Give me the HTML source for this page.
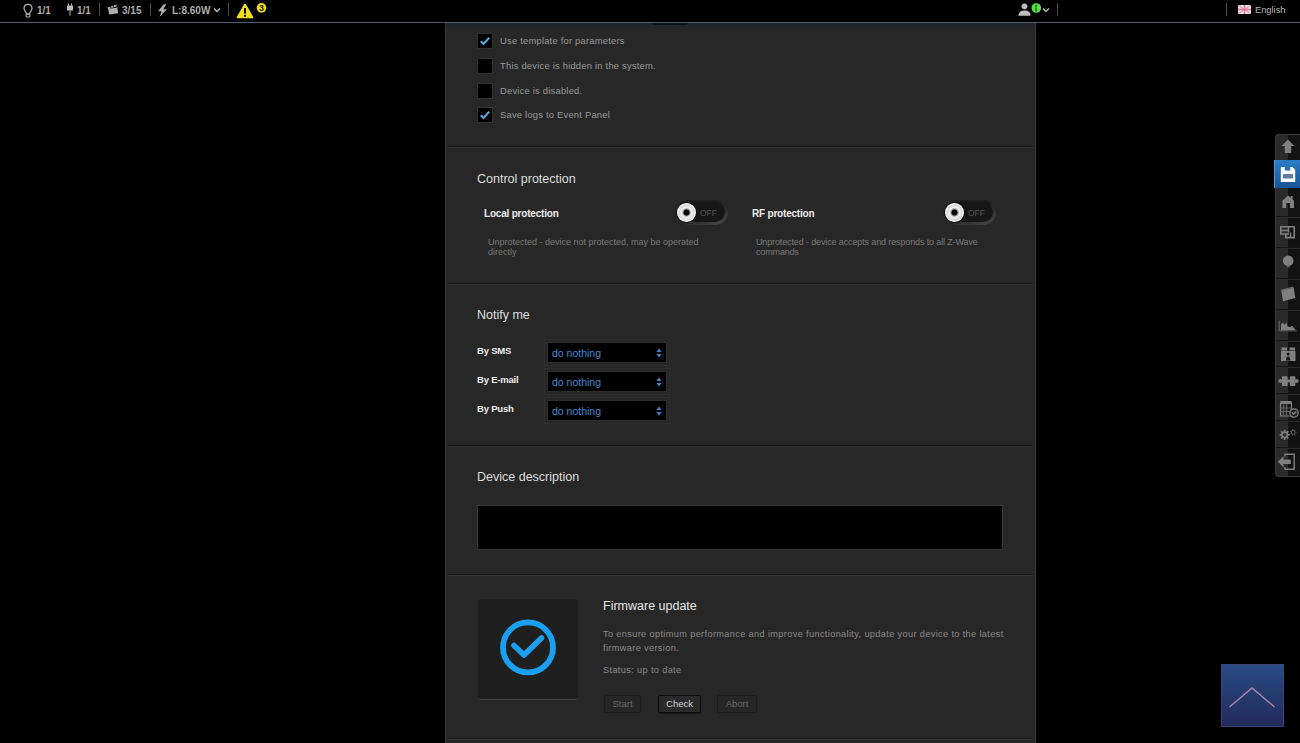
<!DOCTYPE html>
<html><head><meta charset="utf-8">
<style>
*{margin:0;padding:0;box-sizing:border-box}
html,body{width:1300px;height:743px;overflow:hidden;background:#000;font-family:"Liberation Sans",sans-serif}
.a{position:absolute}
.t{position:absolute;white-space:nowrap;line-height:1}
#top{left:0;top:0;width:1300px;height:22px;background:#000}
#topline{left:0;top:22px;width:1300px;height:1px;background:#505c67}
.tb{color:#acacac;font-size:10px;font-weight:700;letter-spacing:0}
.sep{width:1px;height:13px;background:#4e4e4e;top:3px}
#panel{left:445px;top:23px;width:591px;height:720px;background:#272727;border-left:1px solid #3b3b3b;border-right:1px solid #3b3b3b}
.hs{left:448px;width:585px;height:2px;border-top:1px solid #151515;border-bottom:1px solid #353535}
.cb{width:14px;height:14px;background:#000;left:478px;box-shadow:0 0 0 1px #2f2f2f}
.cbt{color:#9a9a9a;font-size:9.4px;letter-spacing:0.22px;left:500px}
.h2{color:#dedede;font-size:12.5px;left:477px}
.lb{color:#ececec;font-size:10px;font-weight:700;letter-spacing:-0.2px}
.desc{color:#7a7a7a;font-size:9px;line-height:10px;white-space:normal}
.sel{left:548px;width:118px;height:19px;background:#000;box-shadow:0 0 0 1px #2c2c2c,0 0 0 3px #272727,0 0 0 4px #2e2e2e}
.selt{color:#4589cf;font-size:10.5px;left:552px}
.btn{height:18px;top:695px;border:1px solid #1d1d1d;border-radius:2px;background:#262626;font-size:9.5px;color:#666;text-align:center;line-height:16px}
.sb{left:1276px;width:24px;height:2px;border-top:1px solid #141414;border-bottom:1px solid #2a2a2a}
.ico{fill:#8a8a8a}
</style></head>
<body>
<div id="top" class="a"></div>
<div id="topline" class="a"></div>

<!-- top left stats -->
<svg class="a" style="left:22px;top:3px" width="12" height="15" viewBox="0 0 12 15">
 <path d="M6 1.3C3.5 1.3 2 3.1 2 5.3c0 1.9 1.3 3.1 2.1 4.3.3.5.4.9.4 1.4h3c0-.5.1-.9.4-1.4.8-1.2 2.1-2.4 2.1-4.3 0-2.2-1.5-4-4-4z" fill="none" stroke="#b5b5b5" stroke-width="1.2"/>
 <rect x="3.9" y="11.1" width="4.2" height="2.9" rx="1.4" fill="none" stroke="#b5b5b5" stroke-width="1.1"/>
</svg>
<div class="t tb" style="left:37px;top:6px">1/1</div>
<svg class="a" style="left:66px;top:3px" width="8" height="13" viewBox="0 0 8 13">
 <rect x="1" y="2.5" width="6" height="5" fill="#bdbdbd"/><rect x="2" y="0.5" width="1" height="2" fill="#bdbdbd"/><rect x="5" y="0.5" width="1" height="2" fill="#bdbdbd"/><rect x="3.5" y="7.5" width="1" height="5" fill="#bdbdbd"/>
</svg>
<div class="t tb" style="left:77px;top:6px">1/1</div>
<div class="a sep" style="left:99px"></div>
<svg class="a" style="left:107px;top:4px" width="12" height="11" viewBox="0 0 12 11">
 <path d="M1.2 5 10.3 3.6 11.2 9.2 2.1 10.6z" fill="#b0b0b0"/><path d="M0.5 3.6 9.3 0.6 9.9 2.3 1.1 5.3z" fill="#b0b0b0"/>
 <path d="M3 1 4 4M5.8 0.2 6.8 3.2" stroke="#000" stroke-width="0.9"/>
</svg>
<div class="t tb" style="left:122px;top:6px">3/15</div>
<div class="a sep" style="left:150px"></div>
<svg class="a" style="left:157px;top:4px" width="11" height="13" viewBox="0 0 11 13">
 <path d="M6.8 0.3 1 7.2h3.6L2.6 12.8 10 5.3H6.4l2.8-5z" fill="#b0b0b0"/>
</svg>
<div class="t tb" style="left:172px;top:6px">L:8.60W</div>
<svg class="a" style="left:213px;top:7px" width="8" height="6" viewBox="0 0 8 6"><path d="M1 1.5 4 4.5 7 1.5" fill="none" stroke="#bdbdbd" stroke-width="1.3"/></svg>
<div class="a sep" style="left:228px"></div>
<svg class="a" style="left:236px;top:3px" width="18" height="16" viewBox="0 0 18 16">
 <path d="M9 1.8 16.2 14.2H1.8z" fill="#f3df1a" stroke="#f3df1a" stroke-width="2.2" stroke-linejoin="round"/>
 <rect x="8" y="5" width="2" height="5.5" fill="#000"/><rect x="8" y="11.8" width="2" height="2" fill="#000"/>
</svg>
<svg class="a" style="left:256px;top:3px" width="11" height="11" viewBox="0 0 11 11">
 <circle cx="5.5" cy="4.9" r="4.8" fill="#f1e01a"/>
 <text x="5.5" y="8.1" font-size="8.8" font-family="Liberation Sans" font-weight="700" text-anchor="middle" fill="#1a1800">3</text>
</svg>

<!-- top right -->
<svg class="a" style="left:1018px;top:3px" width="14" height="13" viewBox="0 0 14 13">
 <circle cx="6.5" cy="3.3" r="2.9" fill="#bdbdbd"/><path d="M0.5 12.8c0-3.5 2.2-5.2 6-5.2s6 1.7 6 5.2z" fill="#bdbdbd"/>
</svg>
<svg class="a" style="left:1031px;top:3px" width="11" height="11" viewBox="0 0 11 11">
 <circle cx="5.3" cy="5" r="4.8" fill="#5fe04a"/><circle cx="5" cy="3" r="1.2" fill="#0d7a12"/><rect x="4.2" y="4.6" width="1.6" height="4" fill="#0d7a12"/>
</svg>
<svg class="a" style="left:1042px;top:7px" width="8" height="6" viewBox="0 0 8 6"><path d="M1 1.5 4 4.5 7 1.5" fill="none" stroke="#bdbdbd" stroke-width="1.3"/></svg>
<div class="a sep" style="left:1057px"></div>
<div class="a sep" style="left:1226px"></div>
<svg class="a" style="left:1238px;top:5px" width="13" height="9" viewBox="0 0 13 9">
 <rect width="13" height="9" fill="#efe6ee"/><path d="M0 0 13 9M13 0 0 9" stroke="#e29ab2" stroke-width="1.2"/><rect x="5.7" y="0" width="1.6" height="9" fill="#e77d9a"/><rect x="0" y="3.7" width="13" height="1.6" fill="#e77d9a"/>
</svg>
<div class="t" style="left:1255px;top:6px;color:#b5b5b5;font-size:9.3px">English</div>

<!-- panel -->
<div id="panel" class="a"></div>
<div class="a" style="left:446px;top:23px;width:589px;height:7px;background:linear-gradient(#1e242a,rgba(39,39,39,0))"></div>
<div class="a" style="left:652px;top:23px;width:36px;height:2px;background:#0b1016;border-radius:0 0 2px 2px"></div>

<!-- section 1 -->
<div class="a cb" style="top:34px"></div>
<svg class="a" style="left:479px;top:36px" width="12" height="10" viewBox="0 0 12 10"><path d="M1.8 5.2 4.5 8 10.2 1.8" fill="none" stroke="#58a3de" stroke-width="2.1"/></svg>
<div class="t cbt" style="top:36px">Use template for parameters</div>
<div class="a cb" style="top:59px"></div>
<div class="t cbt" style="top:61px">This device is hidden in the system.</div>
<div class="a cb" style="top:84px"></div>
<div class="t cbt" style="top:86px">Device is disabled.</div>
<div class="a cb" style="top:108px"></div>
<svg class="a" style="left:479px;top:110px" width="12" height="10" viewBox="0 0 12 10"><path d="M1.8 5.2 4.5 8 10.2 1.8" fill="none" stroke="#58a3de" stroke-width="2.1"/></svg>
<div class="t cbt" style="top:110px">Save logs to Event Panel</div>

<div class="a hs" style="top:146px"></div>

<!-- section 2 -->
<div class="t h2" style="top:173px">Control protection</div>
<div class="t lb" style="left:484px;top:209px">Local protection</div>
<div class="a desc" style="left:488px;top:237px;width:230px">Unprotected - device not protected, may be operated directly</div>
<div class="t lb" style="left:752px;top:209px">RF protection</div>
<div class="a desc" style="left:756px;top:237px;width:240px;letter-spacing:-0.13px">Unprotected - device accepts and responds to all Z-Wave commands</div>

<div class="a" style="left:677px;top:200px;width:51px;height:25px;border-radius:12.5px;background:linear-gradient(160deg,#1c1c1c 0,#1c1c1c 40%,#4a4a4a 100%)"></div>
<div class="a" style="left:679px;top:202px;width:46px;height:20px;border-radius:10px;background:#161616"></div>
<div class="t" style="left:700px;top:209px;color:#565656;font-size:8.5px">OFF</div>
<div class="a" style="left:677px;top:203px;width:19px;height:19px;border-radius:50%;background:radial-gradient(circle at 50% 50%,#000 0,#000 2.6px,#9a9a9a 3.4px,#f2f2f2 5px,#d8d8d8 7px,#ffffff 9.5px);box-shadow:0 0 1px 1px #111"></div>
<div class="a" style="left:945px;top:200px;width:51px;height:25px;border-radius:12.5px;background:linear-gradient(160deg,#1c1c1c 0,#1c1c1c 40%,#4a4a4a 100%)"></div>
<div class="a" style="left:947px;top:202px;width:46px;height:20px;border-radius:10px;background:#161616"></div>
<div class="t" style="left:968px;top:209px;color:#565656;font-size:8.5px">OFF</div>
<div class="a" style="left:945px;top:203px;width:19px;height:19px;border-radius:50%;background:radial-gradient(circle at 50% 50%,#000 0,#000 2.6px,#9a9a9a 3.4px,#f2f2f2 5px,#d8d8d8 7px,#ffffff 9.5px);box-shadow:0 0 1px 1px #111"></div>
<div class="a hs" style="top:283px"></div>

<!-- section 3 -->
<div class="t h2" style="top:309px">Notify me</div>
<div class="t lb" style="left:477px;top:346px;font-size:9.5px;letter-spacing:-0.2px">By SMS</div>
<div class="t lb" style="left:477px;top:375px;font-size:9.5px;letter-spacing:-0.2px">By E-mail</div>
<div class="t lb" style="left:477px;top:404px;font-size:9.5px;letter-spacing:-0.2px">By Push</div>
<div class="a sel" style="top:343px"></div>
<div class="a sel" style="top:372px"></div>
<div class="a sel" style="top:401px"></div>
<div class="t selt" style="top:348px">do nothing</div>
<div class="t selt" style="top:377px">do nothing</div>
<div class="t selt" style="top:406px">do nothing</div>

<svg class="a" style="left:656px;top:348px" width="6" height="10" viewBox="0 0 6 10"><path d="M3 0.5 5.5 4H0.5zM3 9.5 0.5 6h5z" fill="#3b87d4"/></svg><svg class="a" style="left:656px;top:377px" width="6" height="10" viewBox="0 0 6 10"><path d="M3 0.5 5.5 4H0.5zM3 9.5 0.5 6h5z" fill="#3b87d4"/></svg><svg class="a" style="left:656px;top:406px" width="6" height="10" viewBox="0 0 6 10"><path d="M3 0.5 5.5 4H0.5zM3 9.5 0.5 6h5z" fill="#3b87d4"/></svg>
<div class="a hs" style="top:445px"></div>

<!-- section 4 -->
<div class="t h2" style="top:471px">Device description</div>
<div class="a" style="left:477px;top:505px;width:526px;height:45px;background:#000;border:1px solid #3a3a3a"></div>

<div class="a hs" style="top:574px"></div>

<!-- section 5 -->
<div class="a" style="left:478px;top:599px;width:100px;height:101px;background:#1f1f1f;border-radius:3px;border-bottom:1px solid #444"></div>
<svg class="a" style="left:498px;top:617px" width="60" height="60" viewBox="0 0 60 60">
 <circle cx="30" cy="30.4" r="25" fill="none" stroke="#1b9ff0" stroke-width="5.8"/>
 <path d="M16 28.5 26 38 43.5 21" fill="none" stroke="#1b9ff0" stroke-width="5.6" stroke-linecap="round" stroke-linejoin="round"/>
</svg>
<div class="t h2" style="left:603px;top:600px;color:#e6e6e6">Firmware update</div>
<div class="a" style="left:603px;top:627px;width:420px;color:#8a8a8a;font-size:9.2px;letter-spacing:0.36px;line-height:14px">To ensure optimum performance and improve functionality, update your device to the latest firmware version.</div>
<div class="t" style="left:603px;top:666px;color:#8a8a8a;font-size:9.2px;letter-spacing:0.36px">Status: up to date</div>
<div class="a btn" style="left:604px;width:37px">Start</div>
<div class="a btn" style="left:658px;width:43px;background:#2a2a2a;border-color:#0d0d0d;color:#d2d2d2;box-shadow:0 1px 1px #151515">Check</div>
<div class="a btn" style="left:717px;width:40px">Abort</div>

<div class="a hs" style="top:738px"></div>

<!-- sidebar -->
<div class="a" style="left:1275px;top:134px;width:25px;height:343px;background:linear-gradient(90deg,#2a2a2a 0,#2a2a2a 12px,#121212 12px);border-left:1px solid #3a3a3a;border-top:1px solid #3a3a3a;border-bottom:1px solid #3a3a3a;border-radius:4px 0 0 4px"></div>
<div class="a" style="left:1274px;top:160px;width:26px;height:28px;background:linear-gradient(#2b7cc6,#1a5595);border-left:1px solid #4d9ae0"></div>


<!-- sidebar separators -->
<div class="a sb" style="top:216px"></div>
<div class="a sb" style="top:247px"></div>
<div class="a sb" style="top:278px"></div>
<div class="a sb" style="top:309px"></div>
<div class="a sb" style="top:340px"></div>
<div class="a sb" style="top:366px"></div>
<div class="a sb" style="top:393px"></div>
<div class="a sb" style="top:420px"></div>
<div class="a sb" style="top:447px"></div>
<svg class="a" style="left:1275px;top:134px" width="25" height="345" viewBox="1275 134 25 345">
 <g fill="#808080">
 <!-- up arrow -->
 <path d="M1288 139.5 1294.3 146H1291.2V153H1284.8V146H1281.7z"/>
 <!-- home -->
 <path d="M1288 195.5 1294 200.8V208H1290V203H1286.1V208H1282.4V200.8z"/><rect x="1290.7" y="196" width="1.9" height="3.8"/>
 <!-- floorplan -->
 <path d="M1280.8 226.8h13.4v10.8h-8.4v-3.6h-5z" fill="none" stroke="#808080" stroke-width="1.6"/>
 <path d="M1281 230.6h7M1288.5 227v5.5M1286 234h3M1290.5 232.5v5" fill="none" stroke="#808080" stroke-width="1.5"/>
 <!-- bulb -->
 <circle cx="1288.2" cy="260.7" r="5.3"/><rect x="1286.6" y="266" width="3.2" height="1.5" fill="#5a5a5a"/>
 <!-- clapboard -->
 <path d="M1281.3 290.8 1293.8 287.6 1295.3 298 1283 301.3z"/><path d="M1281 289.8 1293 286.6 1293.4 288 1281.4 291.2z" fill="#6a6a6a"/>
 <!-- chart -->
 <path d="M1279.3 320.5V330.8H1297" fill="none" stroke="#6a6a6a" stroke-width="1"/>
 <path d="M1281 330V324.5L1283 322.5 1284.5 325 1286.5 322.3 1287.5 326.5 1290 327 1292 325.8 1294.5 328.5 1295.5 330z"/>
 <!-- panels/gift -->
 <path d="M1281 351h14.5v10H1281z"/><rect x="1281.5" y="347.5" width="5.5" height="3" /><rect x="1289.5" y="347.5" width="5.5" height="3"/>
 <circle cx="1288.1" cy="354" r="1.5" fill="#151515"/><path d="M1285.9 360.5c0-2.6 1-3.9 2.2-3.9s2.2 1.3 2.2 3.9z" fill="#151515"/>
 <!-- puzzle -->
 <rect x="1282" y="376.2" width="5.6" height="9.8" rx="0.8"/><rect x="1289.8" y="376.2" width="5.6" height="9.8" rx="0.8"/>
 <rect x="1287" y="379.6" width="3.4" height="2.8"/>
 <circle cx="1280.4" cy="381" r="2"/><circle cx="1296.6" cy="381" r="2"/>
 <!-- calendar -->
 <path d="M1280.5 403h11v13h-11z" fill="none" stroke="#808080" stroke-width="1.2"/>
 <rect x="1280.5" y="401" width="11" height="3"/>
 <path d="M1283.5 405v10M1286.5 405v10M1280.5 408h11M1280.5 411.5h11" stroke="#6a6a6a" stroke-width="0.8" fill="none"/>
 <circle cx="1294" cy="413" r="4.2" fill="#222" stroke="#808080" stroke-width="1.3"/>
 <path d="M1292 412.5 1293.7 414.3 1296.2 411.5" stroke="#808080" stroke-width="1.3" fill="none"/>
 <!-- gears -->
 <path d="M1288.22 434.03 1289.84 434.02 1289.84 435.58 1288.22 435.57 1287.73 436.74 1288.89 437.88 1287.78 438.99 1286.64 437.83 1285.47 438.32 1285.48 439.94 1283.92 439.94 1283.93 438.32 1282.76 437.83 1281.62 438.99 1280.51 437.88 1281.67 436.74 1281.18 435.57 1279.56 435.58 1279.56 434.02 1281.18 434.03 1281.67 432.86 1280.51 431.72 1281.62 430.61 1282.76 431.77 1283.93 431.28 1283.92 429.66 1285.48 429.66 1285.47 431.28 1286.64 431.77 1287.78 430.61 1288.89 431.72 1287.73 432.86z" fill="#808080"/><circle cx="1284.7" cy="434.8" r="1.9" fill="#2a2a2a"/>
 <path d="M1295.53 431.81 1296.55 431.82 1296.55 432.98 1295.53 432.99 1295.11 433.85 1295.75 434.65 1294.83 435.38 1294.19 434.59 1293.25 434.80 1293.02 435.80 1291.88 435.54 1292.11 434.54 1291.36 433.94 1290.44 434.38 1289.93 433.33 1290.85 432.88 1290.85 431.92 1289.93 431.47 1290.44 430.42 1291.36 430.86 1292.11 430.26 1291.88 429.26 1293.02 429.00 1293.25 430.00 1294.19 430.21 1294.83 429.42 1295.75 430.15 1295.11 430.95z" fill="#505050"/><circle cx="1293.2" cy="432.4" r="1.3" fill="#121212"/>
 <!-- logout -->
 <path d="M1285 456.5V454.3h9.2v15h-9.2V467" fill="none" stroke="#808080" stroke-width="1.4"/>
 <path d="M1277.8 461.8 1283.5 456.3V459.6H1290.8V464H1283.5V467.3z"/>
 </g>
</svg>
<!-- save icon (active) -->
<svg class="a" style="left:1280px;top:166px" width="16" height="17" viewBox="0 0 16 17">
 <path d="M0.8 1h4v3.5h5.5V1h2.2l2.7 2.7V16H0.8z" fill="#fff"/>
 <rect x="3" y="8" width="10" height="4.5" fill="#5d7ea2"/>
</svg>

<!-- scroll-up -->
<div class="a" style="left:1221px;top:664px;width:63px;height:63px;background:linear-gradient(#2b4c86 0,#263f74 35%,#232a5c 100%);border:1px solid #3a4676"></div>
<svg class="a" style="left:1221px;top:664px" width="63" height="63" viewBox="0 0 63 63"><path d="M8.5 43 31 24 53.5 43" fill="none" stroke="#ae86ad" stroke-width="1.4"/></svg>
</body></html>
